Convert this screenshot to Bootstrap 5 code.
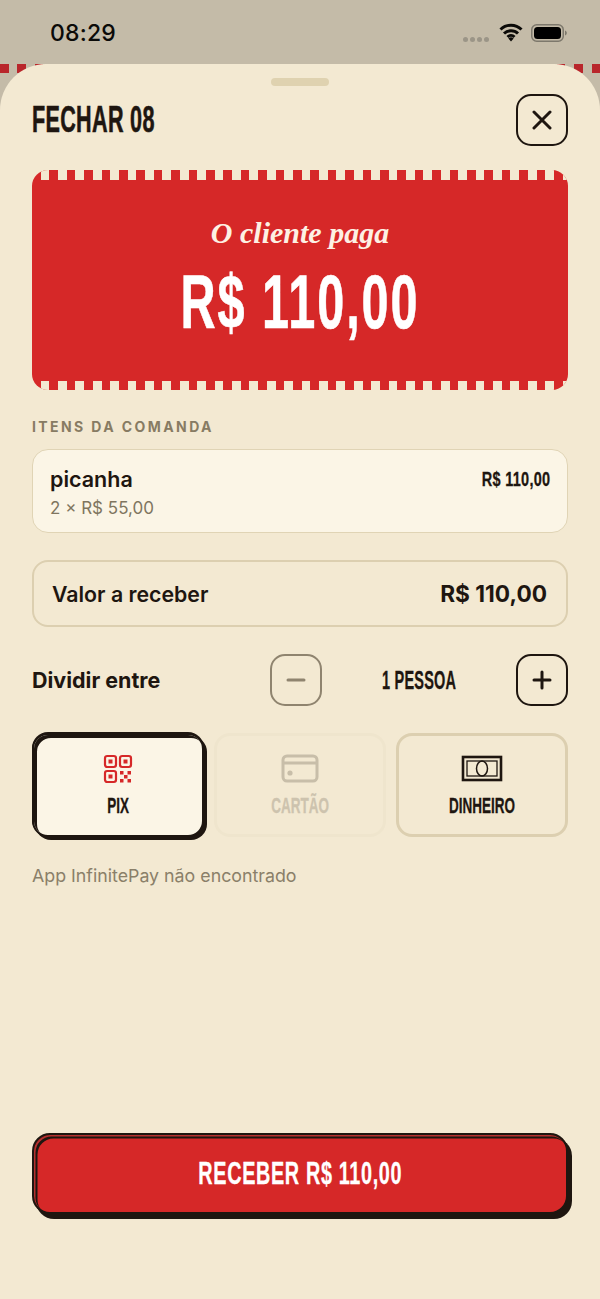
<!DOCTYPE html>
<html lang="pt-BR">
<head>
<meta charset="utf-8">
<title>Fechar 08</title>
<link href="https://cdn.jsdelivr.net/npm/bootstrap@5.3.0/dist/css/bootstrap.min.css" rel="stylesheet">
<style>
:root{--ink:#1e1610;--cream:#f3e9d2;--red:#d62828;--line:#dccfb0;--mut:#877b63}
html,body{height:1299px;overflow:hidden}
body{background:#c4bba8;color:var(--ink);font-family:Inter,"Noto Sans",sans-serif}
.shell{width:600px;height:1299px;position:relative}
.statusline{height:64px;padding:20px 33px 0 50px}
.clock{font:500 23px/26px Inter,sans-serif;color:#0b0a08;letter-spacing:.2px}
.dotset{gap:2px;margin-right:10px;margin-top:17px}
.dotset i{width:5px;height:5px;border-radius:50%;background:#9b9587;display:block}
.awning{position:absolute;left:0;top:64px;width:600px;height:8.7px;background:repeating-linear-gradient(90deg,#b9262b 0 8.7px,transparent 8.7px 17.4px)}
.sheet{position:relative;z-index:1;height:1235px;background:var(--cream);border-radius:46px 46px 0 0;padding:14px 32px 0}
.grip{width:58px;height:8px;border-radius:4px;background:#dfd2b0;margin:0 auto 8px}
.cond{font-family:"Liberation Sans",sans-serif;font-weight:700;display:inline-block;white-space:nowrap;-webkit-text-stroke:.3px currentColor}
.headline{font-size:36px;line-height:52px;letter-spacing:.5px;transform:scaleX(.6);transform-origin:left center;-webkit-text-stroke:.6px currentColor}
.sq{width:52px;height:52px;border:2px solid var(--ink);border-radius:15px;background:transparent;padding:0}
.sq.off{border-color:#8f846f}
.hero{height:220px;margin-top:24px;background:var(--red);border-radius:16px;overflow:hidden;color:#fff;text-align:center}
.teeth{height:9.5px;background:repeating-linear-gradient(90deg,transparent 0 8.7px,var(--cream) 8.7px 17.4px)}
.hero-sub{font:italic 700 30px/40px "Liberation Serif",serif;color:#fdf1e4;margin-top:33px}
.hero-val{font-size:76px;line-height:70px;letter-spacing:3px;margin-top:14px;transform:scaleX(.64);-webkit-text-stroke:.6px currentColor}
.eyebrow{font:700 14px/18px Inter,sans-serif;letter-spacing:2.4px;color:var(--mut);margin-top:28px}
.itemcard{height:84px;margin-top:13px;background:#fbf5e6;border:1.5px solid #e0d4b5;border-radius:16px;padding:14px 17px 0 17px}
.itemname{font:600 21.5px/30px Inter,sans-serif}
.itemsub{font:400 17px/24px Inter,sans-serif;color:#7f755f;margin-top:2px}
.itemprice{font-size:21px;line-height:30px;letter-spacing:.4px;transform:scaleX(.69);transform-origin:right center}
.totalbox{height:67px;margin-top:27px;border:2px solid var(--line);border-radius:16px;padding:0 19px 0 18px}
.totallabel{font:600 21.3px/1 Inter,sans-serif;margin-top:2px}
.totalval{font:700 22.7px/1 Inter,sans-serif;margin-top:2px}
.splitrow{height:52px;margin-top:27px}
.splitlabel{font:700 21.5px/1 Inter,sans-serif;margin-top:2px}
.splitnum{width:194px;text-align:center;font-size:25px;line-height:52px}
.splitnum span{display:inline-block;letter-spacing:.4px;transform:scaleX(.58)}
.payrow{gap:9.5px;margin-top:27px;height:104px}
.payopt{flex:0 0 172.33px;min-width:0;padding:0;background:transparent;border:3px solid var(--line);border-radius:16px;color:var(--ink);display:flex;flex-direction:column;align-items:center}
.payopt svg{display:block;margin-top:18px}
.paytext{font-size:22.5px;line-height:30px;margin-top:7px;transform:scaleX(.6)}
.payopt.chosen{background:#fbf5e6;border:2px solid var(--ink);box-shadow:inset 3px 3px 0 var(--ink),3px 3px 0 var(--ink),0 -1px 0 var(--ink)}
.payopt.chosen svg{margin-top:19px}
.payopt.dim{border-color:#efe5cd;color:#cdc3ae}
.note{font:400 17.8px/24px Inter,sans-serif;color:#8a7f69;margin-top:27px}
.cta{position:absolute;left:32px;top:1069px;width:536px;height:81px;background:var(--red);border:2px solid var(--ink);border-radius:18px;color:#fff;padding:0;box-shadow:inset 1.5px 1.5px 0 #b5302f,inset 3.5px 3.5px 0 var(--ink),4px 5px 0 var(--ink)}
.cta span{font-size:31px;line-height:75px;letter-spacing:1px;transform:scaleX(.64)}
</style>
</head>
<body>
<div class="shell">
  <div class="statusline d-flex justify-content-between align-items-start">
    <span class="clock">08:29</span>
    <div class="d-flex align-items-start">
      <div class="dotset d-flex"><i></i><i></i><i></i><i></i></div>
      <svg width="24" height="19" viewBox="0 0 24 19" class="me-2" style="margin-top:3px"><path d="M1.5 6.5a15 15 0 0 1 21 0M5 10.5a10 10 0 0 1 14 0M8.5 14a5 5 0 0 1 7 0" fill="none" stroke="#0b0a08" stroke-width="3"/><path d="M12 18.5l-2.6-3a3.6 3.6 0 0 1 5.2 0z" fill="#0b0a08"/></svg>
      <svg width="36" height="18" viewBox="0 0 36 18" style="margin-top:4px"><rect x=".75" y=".75" width="31.5" height="16.5" rx="5" fill="none" stroke="#7d786c" stroke-width="1.5"/><rect x="3" y="3" width="27" height="12" rx="3.5" fill="#000"/><path d="M34 6.5c1.2.4 1.8 1.3 1.8 2.5s-.6 2.1-1.8 2.5z" fill="#7d786c"/></svg>
    </div>
  </div>
  <div class="awning"></div>
  <main class="sheet">
    <div class="grip"></div>
    <div class="d-flex justify-content-between align-items-center">
      <h1 class="cond headline m-0">FECHAR 08</h1>
      <button class="sq btn d-flex align-items-center justify-content-center" aria-label="Fechar"><svg width="20" height="20" viewBox="0 0 20 20"><path d="M2 2l16 16M18 2L2 18" stroke="#1e1610" stroke-width="3" stroke-linecap="round"/></svg></button>
    </div>
    <section class="hero d-flex flex-column align-items-stretch">
      <div class="teeth"></div>
      <div class="hero-sub">O cliente paga</div>
      <div class="cond hero-val">R$ 110,00</div>
      <div class="teeth mt-auto"></div>
    </section>
    <div class="eyebrow">ITENS DA COMANDA</div>
    <div class="itemcard d-flex justify-content-between align-items-start">
      <div>
        <div class="itemname">picanha</div>
        <div class="itemsub">2 × R$ 55,00</div>
      </div>
      <span class="cond itemprice">R$ 110,00</span>
    </div>
    <div class="totalbox d-flex justify-content-between align-items-center">
      <span class="totallabel">Valor a receber</span>
      <span class="totalval">R$ 110,00</span>
    </div>
    <div class="splitrow d-flex align-items-center">
      <span class="splitlabel me-auto">Dividir entre</span>
      <button class="sq off btn d-flex align-items-center justify-content-center" aria-label="Menos"><svg width="20" height="20" viewBox="0 0 20 20"><path d="M2 10h16" stroke="#8f846f" stroke-width="3" stroke-linecap="round"/></svg></button>
      <span class="cond splitnum"><span>1 PESSOA</span></span>
      <button class="sq btn d-flex align-items-center justify-content-center" aria-label="Mais"><svg width="20" height="20" viewBox="0 0 20 20"><path d="M2 10h16M10 2v16" stroke="#1e1610" stroke-width="3" stroke-linecap="round"/></svg></button>
    </div>
    <div class="payrow d-flex">
      <button class="payopt chosen">
        <svg width="30" height="30" viewBox="0 0 30 30" fill="none" stroke="#d62828" stroke-width="2.2"><rect x="2" y="2" width="11" height="11" rx="2.2"/><rect x="17" y="2" width="11" height="11" rx="2.2"/><rect x="2" y="17" width="11" height="11" rx="2.2"/><g fill="#d62828" stroke="none"><rect x="5.5" y="5.5" width="4" height="4"/><rect x="20.5" y="5.5" width="4" height="4"/><rect x="5.5" y="20.5" width="4" height="4"/><rect x="17" y="17" width="3.5" height="3.5"/><rect x="24.5" y="17" width="3.5" height="3.5"/><rect x="21" y="21" width="3.5" height="3.5"/><rect x="17" y="25" width="3.5" height="3.5"/><rect x="24.5" y="25" width="3.5" height="3.5"/></g></svg>
        <span class="cond paytext">PIX</span>
      </button>
      <button class="payopt dim" disabled>
        <svg width="38" height="30" viewBox="0 0 38 30" fill="none" stroke="#c8bea9" stroke-width="3"><rect x="2" y="2" width="34" height="25" rx="4"/><path d="M2 9h34"/><circle cx="9" cy="19" r="2.6" fill="#c8bea9" stroke="none"/></svg>
        <span class="cond paytext">CARTÃO</span>
      </button>
      <button class="payopt">
        <svg width="42" height="30" viewBox="0 0 42 30" fill="none" stroke="#1e1610"><rect x="2" y="3" width="38" height="23" stroke-width="2.6"/><rect x="6" y="7" width="30" height="15" stroke-width="1.3"/><ellipse cx="21" cy="14.5" rx="5.5" ry="7.5" stroke-width="1.5"/></svg>
        <span class="cond paytext">DINHEIRO</span>
      </button>
    </div>
    <p class="note mb-0">App InfinitePay não encontrado</p>
    <button class="cta btn"><span class="cond">RECEBER R$ 110,00</span></button>
  </main>
</div>
<script src="https://cdn.jsdelivr.net/npm/bootstrap@5.3.0/dist/js/bootstrap.bundle.min.js"></script>
</body>
</html>
